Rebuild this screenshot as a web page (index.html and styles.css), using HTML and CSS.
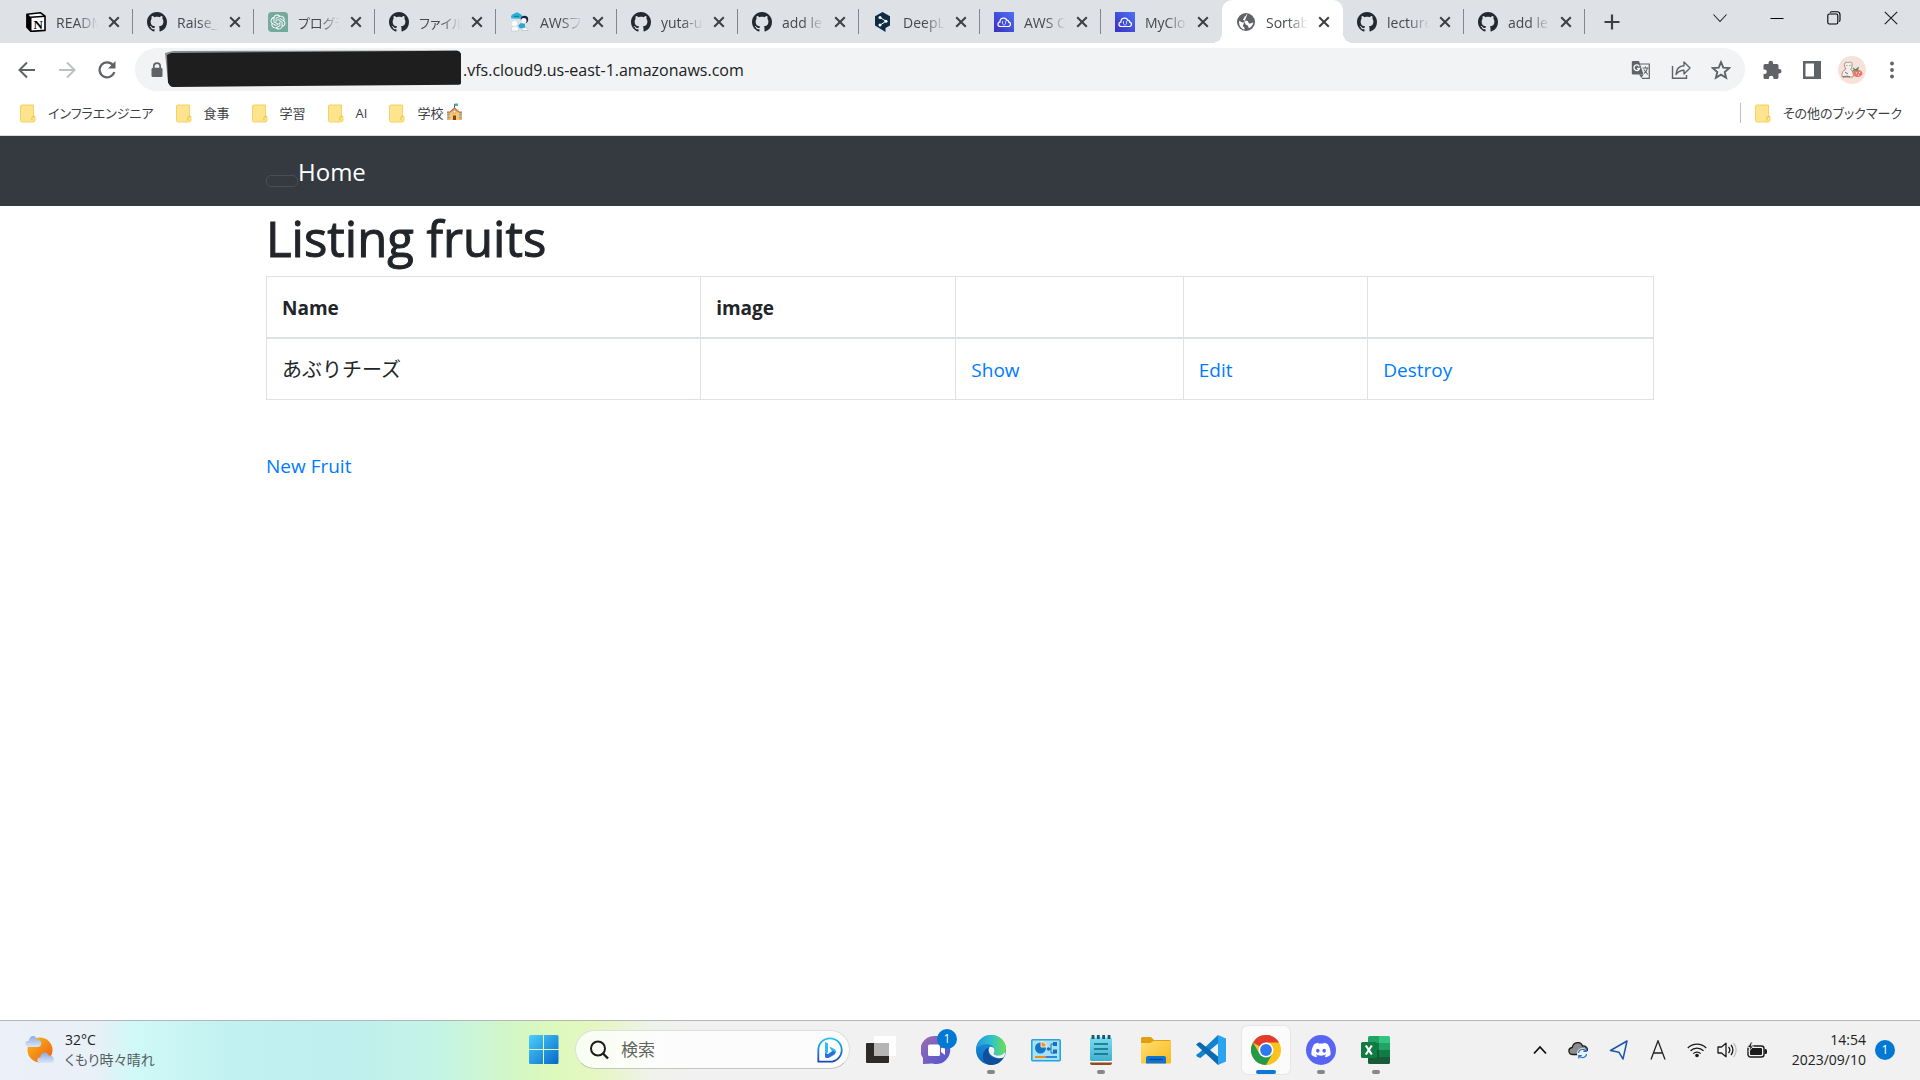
FILE: index.html
```html
<!DOCTYPE html>
<html lang="ja">
<head>
<meta charset="utf-8">
<title>Sortable</title>
<meta name="viewport" content="width=device-width, initial-scale=1">
<link rel="stylesheet" href="styles.css">
</head>
<body>
<svg class="sprite" aria-hidden="true">
  <defs>
    <linearGradient id="g-win" x1="0" y1="0" x2="1" y2="1"><stop offset="0" stop-color="#4cd0fb"/><stop offset="1" stop-color="#0568c8"/></linearGradient>
    <linearGradient id="g-sun" x1="0" y1="0" x2="1" y2="1"><stop offset="0" stop-color="#f9bf1c"/><stop offset="1" stop-color="#ee5a12"/></linearGradient>
    <linearGradient id="g-cloud" x1="0" y1="0" x2="0" y2="1"><stop offset="0" stop-color="#8ea9de"/><stop offset="1" stop-color="#dbe6fb"/></linearGradient>
    <linearGradient id="g-bing" x1="0" y1="0" x2="0" y2="1"><stop offset="0" stop-color="#25c4f3"/><stop offset="1" stop-color="#1647b8"/></linearGradient>
    <linearGradient id="g-chat" x1="0" y1="0" x2="1" y2="1"><stop offset="0" stop-color="#a26cb0"/><stop offset="1" stop-color="#4a55d2"/></linearGradient>
    <linearGradient id="g-edge" x1="0" y1="0" x2="1" y2="0"><stop offset="0" stop-color="#2496dc"/><stop offset=".5" stop-color="#2fc0cf"/><stop offset="1" stop-color="#6fe04b"/></linearGradient>
    <linearGradient id="g-edge2" x1="0" y1="0" x2="0" y2="1"><stop offset="0" stop-color="#1b9de2"/><stop offset="1" stop-color="#0b64bd"/></linearGradient>
    <linearGradient id="g-note" x1="0" y1="0" x2="0" y2="1"><stop offset="0" stop-color="#7bdcec"/><stop offset="1" stop-color="#3fb0cd"/></linearGradient>
    <linearGradient id="g-folder" x1="0" y1="0" x2="1" y2="1"><stop offset="0" stop-color="#ffdf73"/><stop offset="1" stop-color="#f9b81c"/></linearGradient>
    <linearGradient id="g-aws" x1="0" y1="1" x2="1" y2="0"><stop offset="0" stop-color="#3a2fc0"/><stop offset="1" stop-color="#4d72f3"/></linearGradient>
    <symbol id="i-close" viewBox="0 0 12 12"><path d="M1.2 1.2l9.6 9.6M10.8 1.2l-9.6 9.6" fill="none" stroke="#3c4043" stroke-width="2"/></symbol>
    <symbol id="i-github" viewBox="0 0 16 16"><path d="M8 0C3.58 0 0 3.58 0 8c0 3.54 2.29 6.53 5.47 7.59.4.07.55-.17.55-.38 0-.19-.01-.82-.01-1.49-2.01.37-2.53-.49-2.69-.94-.09-.23-.48-.94-.82-1.13-.28-.15-.68-.52-.01-.53.63-.01 1.08.58 1.23.82.72 1.21 1.87.87 2.33.66.07-.52.28-.87.51-1.07-1.78-.2-3.64-.89-3.64-3.95 0-.87.31-1.59.82-2.15-.08-.2-.36-1.02.08-2.12 0 0 .67-.21 2.2.82.64-.18 1.32-.27 2-.27s1.36.09 2 .27c1.53-1.04 2.2-.82 2.2-.82.44 1.1.16 1.92.08 2.12.51.56.82 1.27.82 2.15 0 3.07-1.87 3.75-3.65 3.95.29.25.54.73.54 1.48 0 1.07-.01 1.93-.01 2.2 0 .21.15.46.55.38A8.01 8.01 0 0 0 16 8c0-4.42-3.58-8-8-8z" fill="#24292f"/></symbol>
    <symbol id="i-notion" viewBox="0 0 20 20"><path d="M1 2.2L14.6.8 19 4.2V18.4L5 19.4 1 15.2z" fill="#fff" stroke="#000" stroke-width="1.6" stroke-linejoin="round"/><path d="M1 2.2L5 5.4V19.4L1 15.2z" stroke="#000"/><path d="M5 5.2L19 4.3" stroke="#000" stroke-width="1.6"/><text x="12.2" y="16.6" text-anchor="middle" font-family="Liberation Serif, serif" font-weight="700" font-size="13">N</text></symbol>
    <symbol id="i-openai" viewBox="0 0 32 32"><path d="M6 0h20a6 6 0 0 1 6 6v26H6a6 6 0 0 1-6-6V6a6 6 0 0 1 6-6z" fill="#74aa9c"/><g transform="translate(4 4)"><path fill="#fff" d="M22.2819 9.8211a5.9847 5.9847 0 0 0-.5157-4.9108 6.0462 6.0462 0 0 0-6.5098-2.9A6.0651 6.0651 0 0 0 4.9807 4.1818a5.9847 5.9847 0 0 0-3.9977 2.9 6.0462 6.0462 0 0 0 .7427 7.0966 5.98 5.98 0 0 0 .511 4.9107 6.051 6.051 0 0 0 6.5146 2.9001A5.9847 5.9847 0 0 0 13.2599 24a6.0557 6.0557 0 0 0 5.7718-4.2058 5.9894 5.9894 0 0 0 3.9977-2.9001 6.0557 6.0557 0 0 0-.7475-7.0729zm-9.022 12.6081a4.4755 4.4755 0 0 1-2.8764-1.0408l.1419-.0804 4.7783-2.7582a.7948.7948 0 0 0 .3927-.6813v-6.7369l2.02 1.1686a.071.071 0 0 1 .038.052v5.5826a4.504 4.504 0 0 1-4.4945 4.4944zm-9.6607-4.1254a4.4708 4.4708 0 0 1-.5346-3.0137l.142.0852 4.783 2.7582a.7712.7712 0 0 0 .7806 0l5.8428-3.3685v2.3324a.0804.0804 0 0 1-.0332.0615L9.74 19.9502a4.4992 4.4992 0 0 1-6.1408-1.6464zM2.3408 7.8956a4.485 4.485 0 0 1 2.3655-1.9728V11.6a.7664.7664 0 0 0 .3879.6765l5.8144 3.3543-2.0201 1.1685a.0757.0757 0 0 1-.071 0l-4.8303-2.7865A4.504 4.504 0 0 1 2.3408 7.872zm16.5963 3.8558L13.1038 8.364 15.1192 7.2a.0757.0757 0 0 1 .071 0l4.8303 2.7913a4.4944 4.4944 0 0 1-.6765 8.1042v-5.6772a.79.79 0 0 0-.407-.667zm2.0107-3.0231l-.142-.0852-4.7735-2.7818a.7759.7759 0 0 0-.7854 0L9.409 9.2297V6.8974a.0662.0662 0 0 1 .0284-.0615l4.8303-2.7866a4.4992 4.4992 0 0 1 6.6802 4.66zM8.3065 12.863l-2.02-1.1638a.0804.0804 0 0 1-.038-.0567V6.0742a4.4992 4.4992 0 0 1 7.3757-3.4537l-.142.0805L8.704 5.459a.7948.7948 0 0 0-.3927.6813zm1.0976-2.3654l2.602-1.4998 2.6069 1.4998v2.9994l-2.5974 1.4997-2.6067-1.4997Z"/></g></symbol>
    <symbol id="i-awsdoc" viewBox="0 0 20 20"><path d="M1.5 6.5C.5 4.5 1.500 2 4 2c1-2 5-2 6 0 2.500 0 3 4 1 4.800z" fill="#27b4d8"/><path d="M4 4.300h5" stroke="#14708f" stroke-width="1"/><circle cx="14.500" cy="7.500" r="3.700" fill="#1b2347"/><circle cx="13.800" cy="8.800" r="2.700" fill="#fff"/><circle cx="4.500" cy="11.500" r="2.600" fill="#fff"/><path d="M1.500 19v-3c0-2 6-3 7 0v3z" fill="#f7fafc" stroke="#b0bcc8" stroke-width=".5"/><path d="M8 13.500l3-2.500 4 1v3.500l-5 1z" fill="#27a9cf"/><path d="M12 18.500c0-4 6-3.500 6 0z" fill="#fff" stroke="#9aa5b5" stroke-width=".5"/></symbol>
    <symbol id="i-deepl" viewBox="0 0 20 20"><path d="M9.500 0l7.500 4.200v9.300L12.500 16v4l-4-2.500L2 13.500V4.200z" fill="#0f2b46"/><path d="M7 5.500l6 3.700-6 4" fill="none" stroke="#fff" stroke-width="1"/><circle cx="7" cy="5.500" r="1.500" fill="#fff"/><circle cx="13" cy="9.200" r="1.500" fill="#fff"/><circle cx="7" cy="13" r="1.500" fill="#fff"/></symbol>
    <symbol id="i-cloud9" viewBox="0 0 20 20"><path d="M0 0h20v20H0z" fill="url(#g-aws)"/><path d="M6.500 14.500c-3.300 0-3.300-4.300-.6-4.400 0-5 6-5 7-1.600 1.500-.3 1.800.7 1.800 1.700 2.500.3 2.300 4.300-.7 4.300z" fill="none" stroke="#fff" stroke-width="1.200"/><path d="M8.500 9v3l1.500 1.300 1.500-1.300V9" fill="none" stroke="#b9c8ff"/></symbol>
    <symbol id="i-globe" viewBox="0 0 20 20"><circle cx="10" cy="10" r="9" fill="#5f6368"/><path d="M11.500 1.800c-2 .7-1 2.200-2.500 2.700s0 2-1.800 2.500c-1.200.5 1.300 2.200 3.800 1.700 2 .8.700 2.500 2.700 2.800 1.800.4 2.300-1.200 3.600-.9-.3 2.400-2 4.500-3.600 5.400-2.200.4-.8-2.500-3-2.900-1.800-.4-.8-2.600-2.800-2.600-1.800 0-3.400-1-4.800-1.800C2.600 13.500 5 17 8.500 17.400c.8-1.300-1-2.400-1.700-3.400" fill="#fff" fill-rule="evenodd"/></symbol>
    <symbol id="i-folder" viewBox="0 0 16 19"><path d="M1.500 1h12v11.500h1.500V16a2 2 0 0 1-2 2H2a1.500 1.500 0 0 1-1.500-1.500V2a1 1 0 0 1 1-1z" fill="#ffe490" stroke="#f3d262"/><path d="M12 16.500v-3a1 1 0 0 1 1-1h1.500" fill="none" stroke="#e9bf3a"/></symbol>
    <symbol id="i-school" viewBox="0 0 16 18"><path d="M8 1v4" stroke="#555"/><path d="M8 .5h3.500v2.500H8z" fill="#4db884"/><path d="M.5 9h15v8H.5z" fill="#f2b560"/><path d="M3.500 8L8 4.500 12.500 8v9h-9z" fill="#fbc76c"/><path d="M.5 9.200h3L8 5l4.500 4.200h3" fill="none" stroke="#b9744a" stroke-width="1.200"/><circle cx="8" cy="8.800" r="1.500" fill="#fff" stroke="#8b7355" stroke-width=".6"/><path d="M6.500 12.500h3V17h-3z" fill="#8b3a2b"/><path d="M1 11.500h2M1 14.500h2M13 11.500h2M13 14.500h2" stroke="#5aa7d6" stroke-width="1.600"/></symbol>
  </defs>
</svg>

<header class="chrome">
  <div class="tabstrip">
    <nav class="tabs" aria-label="タブ">
      <div class="tab"><svg class="fav"><use href="#i-notion"/></svg><span class="tab-title">README</span><button class="tab-close" aria-label="閉じる"><svg><use href="#i-close"/></svg></button></div>
      <div class="tab"><svg class="fav"><use href="#i-github"/></svg><span class="tab-title">Raise_</span><button class="tab-close" aria-label="閉じる"><svg><use href="#i-close"/></svg></button></div>
      <div class="tab"><svg class="fav"><use href="#i-openai"/></svg><span class="tab-title kana">プログラ</span><button class="tab-close" aria-label="閉じる"><svg><use href="#i-close"/></svg></button></div>
      <div class="tab"><svg class="fav"><use href="#i-github"/></svg><span class="tab-title kana">ファイル</span><button class="tab-close" aria-label="閉じる"><svg><use href="#i-close"/></svg></button></div>
      <div class="tab"><svg class="fav"><use href="#i-awsdoc"/></svg><span class="tab-title">AWSフ</span><button class="tab-close" aria-label="閉じる"><svg><use href="#i-close"/></svg></button></div>
      <div class="tab"><svg class="fav"><use href="#i-github"/></svg><span class="tab-title">yuta-u</span><button class="tab-close" aria-label="閉じる"><svg><use href="#i-close"/></svg></button></div>
      <div class="tab"><svg class="fav"><use href="#i-github"/></svg><span class="tab-title">add le</span><button class="tab-close" aria-label="閉じる"><svg><use href="#i-close"/></svg></button></div>
      <div class="tab"><svg class="fav"><use href="#i-deepl"/></svg><span class="tab-title">DeepL</span><button class="tab-close" aria-label="閉じる"><svg><use href="#i-close"/></svg></button></div>
      <div class="tab"><svg class="fav"><use href="#i-cloud9"/></svg><span class="tab-title">AWS C</span><button class="tab-close" aria-label="閉じる"><svg><use href="#i-close"/></svg></button></div>
      <div class="tab before-active"><svg class="fav"><use href="#i-cloud9"/></svg><span class="tab-title">MyClo</span><button class="tab-close" aria-label="閉じる"><svg><use href="#i-close"/></svg></button></div>
      <div class="tab active"><svg class="fav"><use href="#i-globe"/></svg><span class="tab-title">Sortab</span><button class="tab-close" aria-label="閉じる"><svg><use href="#i-close"/></svg></button></div>
      <div class="tab"><svg class="fav"><use href="#i-github"/></svg><span class="tab-title">lecture</span><button class="tab-close" aria-label="閉じる"><svg><use href="#i-close"/></svg></button></div>
      <div class="tab"><svg class="fav"><use href="#i-github"/></svg><span class="tab-title">add le</span><button class="tab-close" aria-label="閉じる"><svg><use href="#i-close"/></svg></button></div>
    </nav>
    <button class="new-tab" aria-label="新しいタブ"><svg width="16" height="16" viewBox="0 0 16 16"><path d="M8 .5v15M.5 8h15" stroke="#3c4043" stroke-width="2.200"/></svg></button>
    <div class="window-controls">
      <button aria-label="タブを検索"><svg width="14" height="14" viewBox="0 0 14 14"><path d="M.5 3.500L7 10.500l6.500-7" fill="none" stroke="#222" stroke-width="1.100"/></svg></button>
      <button aria-label="最小化"><svg width="14" height="14" viewBox="0 0 14 14"><path d="M.5 7.500h13" stroke="#000"/></svg></button>
      <button aria-label="元に戻す"><svg width="14" height="14" viewBox="0 0 14 14"><rect x=".8" y="3" width="10" height="10" rx="1.500" fill="none" stroke="#000" stroke-width="1.100"/><path d="M3 1.500C3.500.8 4 .7 5 .7h5a3 3 0 0 1 3 3v5c0 1-.2 1.500-.8 2" fill="none" stroke="#000" stroke-width="1.100"/></svg></button>
      <button aria-label="閉じる"><svg width="14" height="14" viewBox="0 0 14 14"><path d="M.8.8l12.400 12.400M13.200.8L.8 13.200" stroke="#222" stroke-width="1.200"/></svg></button>
    </div>
  </div>

  <div class="toolbar">
    <div class="nav-buttons">
      <button aria-label="戻る"><svg width="18" height="18" viewBox="0 0 18 18"><path d="M17 9H2M9 1.500L1.500 9 9 16.500" fill="none" stroke="#5f6368" stroke-width="2"/></svg></button>
      <button aria-label="進む"><svg width="18" height="18" viewBox="0 0 18 18"><path d="M1 9h15M9 1.500L16.500 9 9 16.500" fill="none" stroke="#bdc1c6" stroke-width="2"/></svg></button>
      <button aria-label="再読み込み"><svg width="18" height="18" viewBox="0 0 18 18"><path d="M15 4.200A7.500 7.500 0 1 0 16.300 11" fill="none" stroke="#5f6368" stroke-width="2.200"/><path d="M17.500 0v7.500H10z" fill="#5f6368"/></svg></button>
    </div>
    <div class="omnibox">
      <svg class="lock" viewBox="0 0 12 16"><path d="M2.800 6V4.300a3.200 3.200 0 0 1 6.400 0V6" fill="none" stroke="#5f6368" stroke-width="1.700"/><rect x=".5" y="5.800" width="11" height="9.200" rx="1.500" fill="#5f6368"/></svg>
      <svg class="redaction" viewBox="0 0 296 39" preserveAspectRatio="none" aria-hidden="true"><path d="M0 3L8 1l283-.5L288 5 8 33l-5-1z" fill="#8a8b8c"/><path d="M2 5l4-2L290 .8q3 .2 4 3V33.500q0 1-2 1.200L8 37q-3 0-5-4.500z" fill="#1e1e1e"/></svg>
      <input class="url" type="text" aria-label="アドレス" value=".vfs.cloud9.us-east-1.amazonaws.com">
      <div class="omni-actions">
        <button aria-label="翻訳"><svg width="20" height="20" viewBox="0 0 20 20"><path d="M8 4h10.300v14.300H11" fill="#f1f3f4" stroke="#5f6368" stroke-width="1.200"/><path d="M2 1h6l4.500 13.500H2A1.200 1.200 0 0 1 .8 13.300V2.200A1.200 1.200 0 0 1 2 1z" fill="#5f6368"/><path d="M8 14.500h4.500L10.500 18z" fill="#5f6368"/><path d="M8.200 6.300A2.800 2.800 0 1 0 8.500 8.500H6" fill="none" stroke="#fff" stroke-width="1.300"/><path d="M11.500 8h6M14.500 6.500V8M16.500 8c-.5 2.500-2 4.500-3.500 5.500M12.800 9.500l4 5" fill="none" stroke="#5f6368" stroke-width="1.100"/></svg></button>
        <button aria-label="共有"><svg width="20" height="20" viewBox="0 0 20 20"><path d="M1.500 6v12.300h14V15" fill="none" stroke="#5f6368" stroke-width="1.400"/><path d="M5 14.500c.3-5 3-8.500 8-8.700V2l6 6-6 6V10.300c-3.500 0-6 1.200-8 4.200z" fill="none" stroke="#5f6368" stroke-width="1.400" stroke-linejoin="round"/></svg></button>
        <button aria-label="ブックマーク"><svg width="20" height="20" viewBox="0 0 20 20"><path d="M10 2.200l2.300 5.400 5.900.5-4.500 3.900 1.400 5.700L10 14.600l-5.100 3.100 1.400-5.700L1.800 8.100l5.900-.5z" fill="none" stroke="#5f6368" stroke-width="1.900"/></svg></button>
      </div>
    </div>
    <div class="tool-actions">
      <button aria-label="拡張機能"><svg width="20" height="20" viewBox="0 0 20 20"><path d="M1.500 5.500A1.500 1.500 0 0 1 3 4h3.500V3a2.300 2.300 0 0 1 4.600 0v1H15a1.500 1.500 0 0 1 1.500 1.500V9h.7a2.300 2.300 0 0 1 0 4.600h-.7v4A1.500 1.500 0 0 1 15 19h-3.500v-1a2.300 2.300 0 0 0-4.600 0v1H3a1.500 1.500 0 0 1-1.500-1.500V14h1a2.300 2.300 0 0 0 0-4.600h-1z" fill="#5f6368"/></svg></button>
      <button aria-label="サイドパネル"><svg width="18" height="18" viewBox="0 0 18 18"><path d="M0 0h18v18H0zM2.500 2.500v13h8.500v-13z" fill="#5f6368" fill-rule="evenodd"/></svg></button>
      <button aria-label="プロフィール"><svg width="28" height="28" viewBox="0 0 28 28"><circle cx="14" cy="14" r="14" fill="#f6e2d8"/><path d="M7 7c1-2 2 0 3.500-.5S14 5.500 14 8s0 4-1.500 5C15 15 16 19 15 21H4.500C3 18 5 14 8 13 6.500 11 6 9 7 7z" fill="#f5efe8" stroke="#8b7e77" stroke-width=".8"/><path d="M8.500 9.500h.8M11.500 9.500h.8M7 16l3 2M5 21c2-1 5-1 7 0" stroke="#6a5f5a" fill="none" stroke-width=".9"/><path d="M15.500 15c3-3 8-1 9 2 .5 2-3 4.500-6 4s-4-3.500-3-6z" fill="#ec7771"/><path d="M14.500 15l4-1.500M15 12l2 2 3-2-1 3" stroke="#4f9360" stroke-width="1.300" fill="none"/><path d="M18 17h1M21 16.500h1M20 19h1" stroke="#fff"/></svg></button>
      <button aria-label="メニュー"><svg width="6" height="18" viewBox="0 0 6 18"><g fill="#5f6368"><circle cx="3" cy="2.500" r="1.900"/><circle cx="3" cy="9" r="1.900"/><circle cx="3" cy="15.500" r="1.900"/></g></svg></button>
    </div>
  </div>

  <nav class="bookmarks" aria-label="ブックマーク">
    <a href="#"><svg class="bm"><use href="#i-folder"/></svg>インフラエンジニア</a>
    <a href="#"><svg class="bm"><use href="#i-folder"/></svg>食事</a>
    <a href="#"><svg class="bm"><use href="#i-folder"/></svg>学習</a>
    <a href="#"><svg class="bm"><use href="#i-folder"/></svg>AI</a>
    <a href="#"><svg class="bm"><use href="#i-folder"/></svg><span class="school-label">学校<svg class="school"><use href="#i-school"/></svg></span></a>
    <a href="#" class="other"><svg class="bm"><use href="#i-folder"/></svg>その他のブックマーク</a>
  </nav>
</header>

<main class="page">
  <nav class="navbar">
    <div class="container">
      <button class="toggler" aria-label="Toggle navigation"></button>
      <a class="brand" href="#">Home</a>
    </div>
  </nav>
  <div class="container content">
    <h1>Listing fruits</h1>
    <table class="fruits">
      <colgroup><col class="c-name"><col class="c-image"><col class="c-show"><col class="c-edit"><col class="c-destroy"></colgroup>
      <thead><tr><th>Name</th><th>image</th><th></th><th></th><th></th></tr></thead>
      <tbody><tr><td class="fruit-name">あぶりチーズ</td><td></td><td><a href="#">Show</a></td><td><a href="#">Edit</a></td><td><a href="#">Destroy</a></td></tr></tbody>
    </table>
    <a class="new-fruit" href="#">New Fruit</a>
  </div>
</main>

<footer class="taskbar">
  <button class="weather">
    <svg width="30" height="30" viewBox="0 0 30 30"><circle cx="15" cy="15" r="12.500" fill="url(#g-sun)"/><path d="M3.500 12C-1 11.500-.5 5.500 3.800 5.800 4.500-.5 11-.5 12 4.500c5-.2 6 6.800 1 7.500z" fill="url(#g-cloud)"/><path d="M15.500 28c-4.500-.3-4.300-5.700-.2-5.700.5-5.800 7-6.300 8.500-1.800 5.500-.8 7 7 2 7.500z" fill="url(#g-cloud)"/></svg>
    <span class="weather-text"><span>32°C</span><span class="cond">くもり時々晴れ</span></span>
  </button>
  <div class="apps">
    <button class="app start" aria-label="スタート"><svg width="30" height="30" viewBox="0 0 30 30"><path d="M1.500 0H14v14H0V1.500A1.500 1.500 0 0 1 1.500 0zM15 0h13a1.500 1.500 0 0 1 1.500 1.500V14H15zM0 15h14v14H1.500A1.500 1.500 0 0 1 0 27.500zM15 15h14.500v12.500A1.500 1.500 0 0 1 28 29H15z" fill="url(#g-win)"/></svg></button>
    <div class="search">
      <svg width="20" height="20" viewBox="0 0 20 20"><circle cx="9" cy="8.500" r="7" fill="none" stroke="#1d1d1d" stroke-width="2"/><path d="M14 13.500l5 5" stroke="#1d1d1d" stroke-width="2.400"/></svg>
      <input type="text" placeholder="検索" aria-label="検索">
      <svg width="26" height="26" viewBox="0 0 26 26"><path d="M1.300 24.700V13A11.700 11.700 0 1 1 13 24.700z" fill="#fff" stroke="url(#g-bing)" stroke-width="1.800" stroke-linejoin="round"/><path d="M8 5l3 1.500v8.500L8 19.500z" fill="#33b8f5"/><path d="M8 19.500v-3l3 .5 5-3.500c3.500-.5 3 3 1.500 4l-5 3c-2.500 1-4.500 .5-4.500-1z" fill="#2a6fe0"/><path d="M12.300 9.500l4.500 2.200c2.200 1 2.700 2.700 2.200 4.500-1-1.700-2.500-2.200-4.700-2.700z" fill="#2fb4ef"/></svg>
    </div>
    <button class="app" aria-label="タスク ビュー"><svg width="30" height="30" viewBox="0 0 30 30"><rect x="0" y="8" width="23" height="20" rx="1" fill="#2c2b2a"/><rect x="8" y="1" width="22" height="20" rx="1" fill="#fff" opacity=".9"/><path d="M8 8h15v13H8z" fill="#b5b5b5"/></svg></button>
    <button class="app" aria-label="チャット"><svg width="30" height="30" viewBox="0 0 30 30"><path d="M15 1a14 14 0 1 1-3.500 27.500L2 29V23A14 14 0 0 1 15 1z" fill="url(#g-chat)"/><rect x="7" y="9.500" width="12" height="11.500" rx="1.500" fill="#fff"/><path d="M20 13.500l4-3v9.500l-4-3z" fill="#fff"/></svg><span class="badge on-app">1</span></button>
    <button class="app running" aria-label="Edge"><svg width="30" height="30" viewBox="0 0 30 30"><circle cx="15" cy="15" r="15" fill="url(#g-edge2)"/><path d="M0 14C1 5 8 0 15 0c9 0 15 6.500 15 13 0 5-4 7.500-8 7.500-3 0-5-1-4-3 2-3-.5-7-5-8C7 8.500 2 11 0 14z" fill="url(#g-edge)"/><path d="M27.500 22.500C24 29 17 31 12 29.500 5 27 5 15 13 12.500c-2 4-.5 7.500 3 9.500 4 2.200 8 1.500 11.500.5z" fill="#104f9c"/><path d="M13.500 12c3-1.500 6.500 2 4.500 5.500-1 2 1 3 4 3 3.500 0 6.500-2 7.500-4.500 0 3-.8 5-2 6.500-4 1.500-9.500.5-12.500-2.500-2-2-3-5.500-1.500-8z" fill="#f2f2f2"/></svg></button>
    <button class="app" aria-label="コントロール パネル"><svg width="30" height="30" viewBox="0 0 30 30"><rect x=".8" y="4.800" width="28.400" height="21" rx="1" fill="#a5e2f8" stroke="#2ba2dc" stroke-width="1.600"/><circle cx="9.500" cy="13" r="5.500" fill="#1477c5"/><path d="M10 12V6.500a6 6 0 0 1 5.500 5.500z" fill="#f9942a" stroke="#fff" stroke-width=".8"/><path d="M17 14h3V9h4M20 14v4h4" fill="none" stroke="#1970b8"/><circle cx="17.500" cy="14" r="1.700" fill="#1970b8"/><path d="M22 7h4v4h-4zM22 14.500h4v4h-4z" fill="#1970b8"/><path d="M4 22h11" stroke="#f28a1c" stroke-width="2"/><path d="M15 22h11" stroke="#2b8ad0" stroke-width="2"/></svg></button>
    <button class="app running" aria-label="メモ帳"><svg width="30" height="30" viewBox="0 0 30 30"><path d="M4 26h22v2a2 2 0 0 1-2 2H6a2 2 0 0 1-2-2z" fill="#97491b"/><path d="M4 24h22v3.500H4z" fill="#fff"/><rect x="4" y="2.500" width="22" height="23.500" rx="1.500" fill="url(#g-note)"/><path d="M8 9h14M8 14h14M8 19h14" stroke="#0d6884" stroke-width="1.700"/><path d="M7 0v4M12.300 0v4M17.600 0v4M23 0v4" stroke="#0f5b76" stroke-width="2.800"/></svg></button>
    <button class="app" aria-label="エクスプローラー"><svg width="30" height="30" viewBox="0 0 30 30"><path d="M0 3.500A1.500 1.500 0 0 1 1.500 2H10l3 3h15.500A1.500 1.500 0 0 1 30 6.500V10H0z" fill="#dfa110"/><path d="M0 8h9l4-2h17v21.500a1 1 0 0 1-1 1H1a1 1 0 0 1-1-1z" fill="url(#g-folder)"/><path d="M5 28.500V23a2 2 0 0 1 2-2h16a2 2 0 0 1 2 2v5.500z" fill="#1174d0"/><path d="M8.500 24.500h13" stroke="#064a94" stroke-width="1.300"/></svg></button>
    <button class="app" aria-label="Visual Studio Code"><svg width="30" height="30" viewBox="0 0 30 30"><path d="M22 0L3.500 17.500 0 20l1.500 2 3 1L22 8.500z" fill="#1283cf"/><path d="M0 9.500L3 7.200l1.500.3L22 21.500V30z" fill="#0a6bb1"/><path d="M22 0l8 3.500v23L22 30z" fill="#29a4f0"/></svg></button>
    <button class="app current" aria-label="Chrome"><svg width="30" height="30" viewBox="0 0 30 30"><circle cx="15" cy="15" r="15" fill="#fbc31b"/><path d="M15 15L2 7.500A15 15 0 0 1 28 7.500H15z" fill="#e33b2e"/><path d="M2 7.500A15 15 0 0 0 15 30l6.500-11.300L15 15 8.500 18.700z" fill="#249a48"/><circle cx="15" cy="15" r="7.500" fill="#fff"/><circle cx="15" cy="15" r="5.900" fill="#3078ee"/></svg></button>
    <button class="app running" aria-label="Discord"><svg width="30" height="30" viewBox="0 0 30 30"><circle cx="15" cy="15" r="15" fill="#5865f2"/><g transform="translate(5.400 5.400) scale(.8)"><path fill="#fff" d="M20.317 4.3698a19.7913 19.7913 0 00-4.8851-1.5152.0741.0741 0 00-.0785.0371c-.211.3753-.4447.8648-.6083 1.2495-1.8447-.2762-3.68-.2762-5.4868 0-.1636-.3933-.4058-.8742-.6177-1.2495a.077.077 0 00-.0785-.037 19.7363 19.7363 0 00-4.8852 1.515.0699.0699 0 00-.0321.0277C.5334 9.0458-.319 13.5799.0992 18.0578a.0824.0824 0 00.0312.0561c2.0528 1.5076 4.0413 2.4228 5.9929 3.0294a.0777.0777 0 00.0842-.0276c.4616-.6304.8731-1.2952 1.226-1.9942a.076.076 0 00-.0416-.1057c-.6528-.2476-1.2743-.5495-1.8722-.8923a.077.077 0 01-.0076-.1277c.1258-.0943.2517-.1923.3718-.2914a.0743.0743 0 01.0776-.0105c3.9278 1.7933 8.18 1.7933 12.0614 0a.0739.0739 0 01.0785.0095c.1202.099.246.1981.3728.2924a.077.077 0 01-.0066.1276 12.2986 12.2986 0 01-1.873.8914.0766.0766 0 00-.0407.1067c.3604.698.7719 1.3628 1.225 1.9932a.076.076 0 00.0842.0286c1.961-.6067 3.9495-1.5219 6.0023-3.0294a.077.077 0 00.0313-.0552c.5004-5.177-.8382-9.6739-3.5485-13.6604a.061.061 0 00-.0312-.0286zM8.02 15.3312c-1.1825 0-2.1569-1.0857-2.1569-2.419 0-1.3332.9555-2.4189 2.157-2.4189 1.2108 0 2.1757 1.0952 2.1568 2.419 0 1.3332-.9555 2.4189-2.1569 2.4189zm7.9748 0c-1.1825 0-2.1569-1.0857-2.1569-2.419 0-1.3332.9554-2.4189 2.1569-2.4189 1.2108 0 2.1757 1.0952 2.1568 2.419 0 1.3332-.946 2.4189-2.1568 2.4189Z"/></g></svg></button>
    <button class="app running" aria-label="Excel"><svg width="30" height="30" viewBox="0 0 30 30"><path d="M7 2.500A1.500 1.500 0 0 1 8.500 1H18v7H7z" fill="#21a366"/><path d="M18 1h9.500A1.500 1.500 0 0 1 29 2.500V8H18z" fill="#33c481"/><path d="M7 8h11v14H7z" fill="#107c41"/><path d="M18 8h11v7H18z" fill="#21a366"/><path d="M18 15h11v7H18z" fill="#107c41"/><path d="M7 15h11v7h11v5.500a1.500 1.500 0 0 1-1.500 1.500h-19A1.500 1.500 0 0 1 7 27.500z" fill="#185c37"/><rect x="0" y="7" width="16" height="16" rx="1.500" fill="#107c41"/><path d="M4.800 10.500l6 9M10.800 10.500l-6 9" stroke="#fff" stroke-width="2.200"/></svg></button>
  </div>
  <div class="tray">
    <button aria-label="隠れているインジケーター"><svg width="14" height="10" viewBox="0 0 14 10"><path d="M1 8.500l6-6.500 6 6.500" fill="none" stroke="#111" stroke-width="1.800"/></svg></button>
    <button aria-label="OneDrive"><svg width="20" height="18" viewBox="0 0 20 18"><path d="M5 13.500c-5 0-5.500-6.500-.8-7C5.500.5 13 0 14.500 5c3.500-.3 5 2 5 4.500L14 13.500z" fill="#8d8d8d" stroke="#1c1c1c" stroke-width="1.300"/><circle cx="14.500" cy="12.500" r="5.500" fill="#f2f2f2"/><path d="M10.500 12a4 4 0 0 1 7.500-1.500M18.500 13a4 4 0 0 1-7.500 1.500M18.300 7.500v3h-3M10.800 17.500v-3h3" fill="none" stroke="#1b76d0" stroke-width="1.200"/></svg></button>
    <button aria-label="位置情報"><svg width="20" height="20" viewBox="0 0 20 20"><path d="M18 1L1.500 10.500l8.500 1.800 4 6.700z" fill="none" stroke="#1c56ad" stroke-width="1.500" stroke-linejoin="round"/></svg></button>
    <button aria-label="入力モード"><svg width="16" height="20" viewBox="0 0 16 20"><path d="M1 19.500L8 .8l7 18.700M3.500 13h9" fill="none" stroke="#222" stroke-width="1.300"/></svg></button>
    <button class="quick" aria-label="ネットワーク、音量、バッテリー">
      <svg width="20" height="16" viewBox="0 0 20 16"><path d="M.8 6a13 13 0 0 1 18.400 0M3.500 8.800a9.200 9.200 0 0 1 13 0M6.300 11.600a5.300 5.300 0 0 1 7.400 0" fill="none" stroke="#1a1a1a" stroke-width="1.300"/><circle cx="10" cy="13.500" r="1.800" fill="#1a1a1a"/></svg>
      <svg width="20" height="16" viewBox="0 0 20 16"><path d="M1 5h3.500L9 1.200v13.600L4.500 11H1z" fill="none" stroke="#1a1a1a" stroke-width="1.300" stroke-linejoin="round"/><path d="M11.500 5a4.500 4.500 0 0 1 0 6M14 3a7.500 7.500 0 0 1 0 10" fill="none" stroke="#1a1a1a" stroke-width="1.300"/><path d="M16.500 1a10.500 10.500 0 0 1 0 14" fill="none" stroke="#bbb" stroke-width="1.200"/></svg>
      <svg width="20" height="16" viewBox="0 0 20 16"><rect x="1" y="4" width="16" height="11" rx="2.500" fill="none" stroke="#1a1a1a" stroke-width="1.400"/><rect x="3" y="6" width="12" height="7" rx="1" fill="#1a1a1a"/><path d="M17.500 7h1a1.500 1.500 0 0 1 1.500 1.500v2a1.500 1.500 0 0 1-1.500 1.500h-1z" fill="#1a1a1a"/><path d="M4 0L.5 5.500H3L2 9.500l4.500-5.500H4L5.500 0z" fill="#1a1a1a" stroke="#f0f0f0" stroke-width=".8"/></svg>
    </button>
    <button class="clock"><span>14:54</span><span>2023/09/10</span></button>
    <span class="badge">1</span>
  </div>
</footer>
</body>
</html>
```

FILE: styles.css
```css
*, *::before, *::after { box-sizing: border-box; }

body {
  margin: 0;
  min-height: 100vh;
  display: flex;
  flex-direction: column;
  background: #fff;
  color: #212529;
  font-family: "Open Sans", "Noto Sans CJK JP", sans-serif;
  font-size: 19px;
  line-height: 30px;
}

button {
  display: flex;
  align-items: center;
  justify-content: center;
  padding: 0;
  border: 0;
  background: none;
  color: inherit;
  font: inherit;
}

svg { display: block; flex: none; }
a { color: #007bff; text-decoration: none; }

.sprite { position: absolute; width: 0; height: 0; }

/* Browser frame */
.chrome {
  font-size: 14px;
  line-height: 20px;
  font-feature-settings: "palt";
  border-bottom: 1px solid #dadce0;
}

.tabstrip {
  display: flex;
  height: 43px;
  padding: 0 1px 0 12px;
  background: #dee1e6;
}

.tabs { display: flex; flex: 0 1 1573px; min-width: 0; }

.tab {
  display: flex;
  align-items: center;
  flex: 1 1 0;
  min-width: 0;
  padding: 0 13px 0 14px;
  color: #45494d;
  background: linear-gradient(#80868b, #80868b) right 9px / 1px 25px no-repeat;
}
.tab.before-active { background: none; }
.tab.active {
  position: relative;
  background: #fff;
  border-radius: 10px 10px 0 0;
}
.tab.active::before,
.tab.active::after {
  content: "";
  position: absolute;
  bottom: 0;
  width: 10px;
  height: 10px;
}
.tab.active::before { right: 100%; background: radial-gradient(circle at 0 0, transparent 10px, #fff 10px); }
.tab.active::after { left: 100%; background: radial-gradient(circle at 100% 0, transparent 10px, #fff 10px); }
.tab .fav { width: 20px; height: 20px; }
.tab-title {
  flex: 1 1 0;
  min-width: 0;
  margin: 2px 10px 0;
  overflow: hidden;
  white-space: nowrap;
  mask-image: linear-gradient(to right, #000 50%, transparent);
}
.tab-title.kana { font-size: 13px; }
.tab-close svg { width: 12px; height: 12px; }

.new-tab { width: 54px; }
.window-controls { display: flex; margin-left: auto; padding-bottom: 7px; }
.window-controls button { width: 57px; }

.toolbar { display: flex; align-items: center; height: 48px; padding-top: 5px; }
.nav-buttons { display: flex; width: 135px; padding-left: 7px; }
.nav-buttons button { width: 40px; }

.omnibox {
  display: flex;
  align-items: center;
  flex: 1;
  height: 43px;
  padding: 0 14px 0 16px;
  background: #f1f3f4;
  border-radius: 22px;
}
.lock { width: 12px; height: 16px; }
.redaction { width: 298px; height: 39px; margin-left: 2px; }
.url {
  flex: 1;
  min-width: 0;
  padding: 0;
  border: 0;
  outline: 0;
  background: none;
  color: #202124;
  font: inherit;
  font-size: 16px;
}
.omni-actions { display: flex; gap: 20px; }
.tool-actions { display: flex; align-items: center; padding: 0 8px 0 7px; }
.tool-actions button { width: 40px; }

.bookmarks {
  display: flex;
  align-items: center;
  gap: 22px;
  height: 44px;
  padding: 0 18px 0 20px;
  font-size: 13px;
}
.bookmarks a { display: flex; align-items: center; gap: 12px; color: #3c4043; }
.bookmarks .bm { width: 16px; height: 19px; }
.school-label { display: flex; gap: 3px; }
.school { width: 17px; height: 18px; }
.bookmarks .other { margin-left: auto; padding-left: 14px; border-left: 1px solid #bdc1c6; }

/* Web page */
.page { flex: 1; }

.container { width: 100%; max-width: 1426px; margin: 0 auto; padding: 0 19px; }

.navbar { padding: 10px 0; background: #343a40; }
.navbar .container { display: flex; align-items: baseline; padding-top: 7px; padding-bottom: 5px; }
.toggler {
  width: 32px;
  height: 12px;
  margin-bottom: 4px;
  align-self: flex-end;
  border: 1px solid #484e53;
  border-radius: 5px;
}
.brand { color: #fff; font-size: 24px; line-height: 38px; }

h1 {
  margin: 4px 0 10px;
  font-size: 49px;
  font-weight: 500;
  line-height: 56px;
  -webkit-text-stroke: 1px currentColor;
}

.fruits {
  width: 100%;
  table-layout: fixed;
  border-collapse: collapse;
  border: 1px solid #dee2e6;
}
.fruits th, .fruits td {
  height: 61px;
  padding: 2px 15px 0;
  border: 1px solid #dee2e6;
  text-align: left;
}
.fruits td { height: 62px; }
.fruits th { border-bottom-width: 2px; font-weight: 700; }
.fruits .fruit-name { font-size: 20px; }
.c-name { width: 31.3%; }
.c-image { width: 18.4%; }
.c-show { width: 16.4%; }
.c-edit { width: 13.3%; }

.new-fruit { display: inline-block; margin-top: 51px; }

/* Taskbar */
.taskbar {
  display: grid;
  grid-template-columns: 1fr auto 1fr;
  height: 60px;
  padding-bottom: 2px;
  border-top: 1px solid #b4b8b8;
  background: linear-gradient(90deg, #edf0f8 0, #e8f0f8 5%, #d0f9f7 7%, #c2f1f1 12%, #bfefef 18%, #c4f4e4 23%, #d4f7c4 27%, #def9bc 29%, #e4f7c0 31%, #f0f2ec 34%, #f1f1f1 36%);
  font-size: 14px;
  line-height: 20px;
}

.weather { justify-self: start; gap: 10px; padding-left: 25px; }
.weather-text { display: flex; flex-direction: column; text-align: left; color: #222; }
.weather-text .cond { color: #555f5f; font-feature-settings: "palt"; }

.apps { display: flex; align-items: center; gap: 7px; }
.app { position: relative; width: 48px; height: 48px; border-radius: 6px; }
.app.current { background: #fbfbfb; box-shadow: 0 0 1px 1px #e6e6e6; }
.app.running::after,
.app.current::after {
  content: "";
  position: absolute;
  bottom: 0;
  width: 8px;
  height: 4px;
  border-radius: 2px;
  background: #868686;
}
.app.current::after { width: 20px; background: #0a78d4; }

.search {
  display: flex;
  align-items: center;
  gap: 12px;
  width: 275px;
  height: 39px;
  padding: 0 6px 0 13px;
  background: rgba(255, 255, 255, .8);
  border: 1px solid #dde0dc;
  border-bottom-color: #c4c6c2;
  border-radius: 20px;
}
.search input {
  flex: 1;
  min-width: 0;
  padding: 0;
  border: 0;
  outline: 0;
  background: none;
  font: inherit;
  font-size: 17px;
}
.search input::placeholder { color: #62665f; opacity: 1; }

.badge {
  display: flex;
  align-items: center;
  justify-content: center;
  width: 20px;
  height: 20px;
  border-radius: 50%;
  background: #0078d4;
  color: #fff;
  font-size: 12px;
}
.badge.on-app { position: absolute; top: 3px; right: 3px; }

.tray { display: flex; align-items: center; justify-content: flex-end; padding-right: 25px; }
.tray button { margin-right: 21px; }
.tray .quick { gap: 10px; }
.tray .clock {
  flex-direction: column;
  align-items: flex-end;
  min-width: 78px;
  margin-right: 9px;
  color: #222;
}
```
